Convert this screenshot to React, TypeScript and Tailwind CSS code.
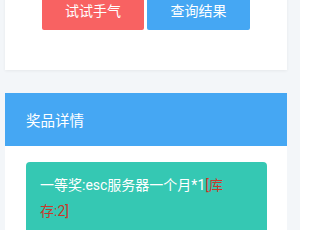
import React from "react";

export default function App() {
  return (
    <div
      className="w-[300px] h-[230px] overflow-hidden bg-[#f3f6f9]"
      style={{ fontFamily: "Roboto, 'Noto Sans CJK SC', sans-serif" }}
    >
      <div className="-mt-[10px] flex flex-col">
        <div className="ml-[5px] w-[282px] bg-white pt-[4px] pb-[40px] shadow-[0_1px_3px_rgba(0,0,0,0.06)] flex justify-center gap-[3px]">
          <button className="w-[102px] h-[36px] rounded-[2px] bg-[#f86262] text-white text-[14px] leading-none flex items-center justify-center pb-[3px]">
            试试手气
          </button>
          <button className="w-[103px] h-[36px] rounded-[2px] bg-[#45a7f3] text-white text-[14px] leading-none flex items-center justify-center pb-[3px]">
            查询结果
          </button>
        </div>
        <div className="ml-[5px] mt-[23px] w-[282px] flex flex-col">
          <div className="h-[53px] bg-[#45a7f3] flex items-center pl-[21px] pt-[4px] text-white text-[14.5px]">
            奖品详情
          </div>
          <div className="bg-white pt-[16px] pl-[21px] pr-[20px] h-[100px]">
            <p className="rounded-[4px] bg-[#35c8b3] pl-[14px] pr-[38px] pt-[10px] pb-[10px] text-white text-[14px] leading-[26px]">
              一等奖:esc服务器一个月*1<span className="text-[#c9382a]">[库存:2]</span>
            </p>
          </div>
        </div>
      </div>
    </div>
  );
}
